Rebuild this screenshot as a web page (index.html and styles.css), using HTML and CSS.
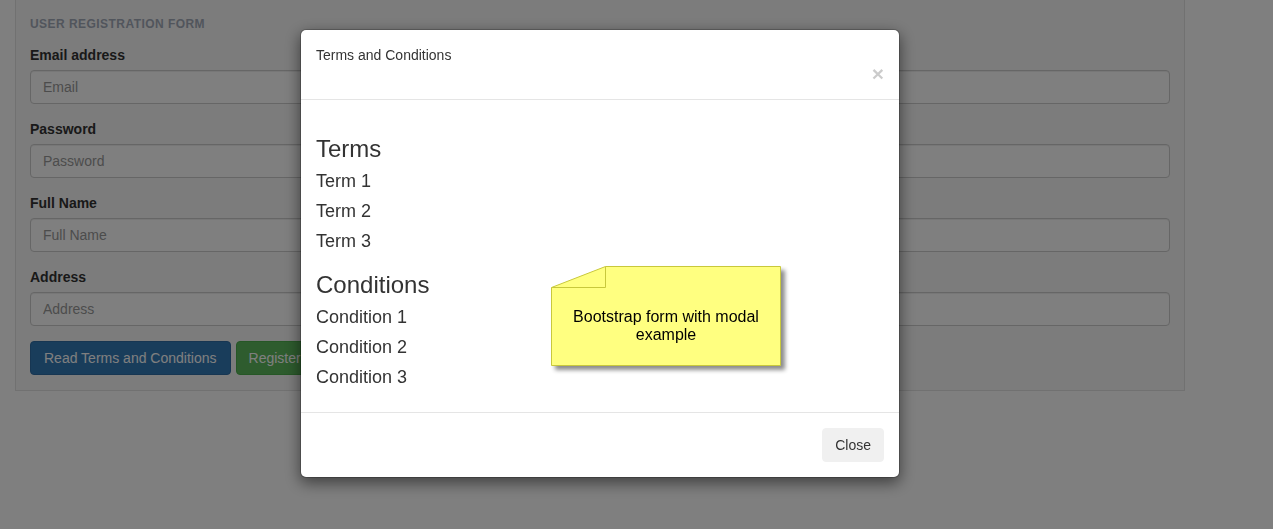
FILE: index.html
```html
<!DOCTYPE html>
<html>
<head>
<meta charset="utf-8">
<title>User Registration Form</title>
<link rel="stylesheet" href="styles.css">
</head>
<body>
<div class="page">
  <div class="well">
    <div class="form-title">User Registration Form</div>
    <div class="form-group">
      <label class="control-label">Email address</label>
      <input class="form-control" type="email" placeholder="Email">
    </div>
    <div class="form-group">
      <label class="control-label">Password</label>
      <input class="form-control" type="password" placeholder="Password">
    </div>
    <div class="form-group">
      <label class="control-label">Full Name</label>
      <input class="form-control" type="text" placeholder="Full Name">
    </div>
    <div class="form-group">
      <label class="control-label">Address</label>
      <input class="form-control" type="text" placeholder="Address">
    </div>
    <div class="btn-row">
      <button class="btn btn-primary">Read Terms and Conditions</button>
      <button class="btn btn-success">Register</button>
    </div>
  </div>
</div>

<div class="backdrop"></div>

<div class="modal">
  <div class="modal-header">
    <h4 class="modal-title">Terms and Conditions</h4>
    <button class="close" type="button">&times;</button>
  </div>
  <div class="modal-body">
    <h3>Terms</h3>
    <h4>Term 1</h4>
    <h4>Term 2</h4>
    <h4>Term 3</h4>
    <h3>Conditions</h3>
    <h4>Condition 1</h4>
    <h4>Condition 2</h4>
    <h4>Condition 3</h4>
  </div>
  <div class="modal-footer">
    <button class="btn btn-default" type="button">Close</button>
  </div>
</div>

<div class="note">
  <svg class="note-shape" width="234" height="104" viewBox="0 0 234 104">
    <polygon points="0.5,21.5 54.5,0.5 229.5,0.5 229.5,99.5 0.5,99.5" fill="#ffff80" stroke="#c8c83c" stroke-width="1"/>
    <path d="M54.5,0.5 V21.5 H0.5" fill="none" stroke="#c8c83c" stroke-width="1"/>
  </svg>
  <div class="note-text">Bootstrap form with modal<br>example</div>
</div>
</body>
</html>
```
FILE: styles.css
```css
* { box-sizing: border-box; }

html, body {
  margin: 0;
  padding: 0;
  background: #fff;
  font-family: "Liberation Sans", Arial, Helvetica, sans-serif;
  font-size: 14px;
  line-height: 1.42857;
  color: #333;
  overflow: hidden;
}

.page {
  padding: 0 15px;
}

.well {
  width: 1170px;
  background: #f8f8f8;
  border: 1px solid #e3e3e3;
  border-top: none;
  padding: 16px 14px 15px 14px;
}

.form-title {
  font-size: 12px;
  font-weight: bold;
  text-transform: uppercase;
  letter-spacing: 0.45px;
  color: #a3abb8;
  line-height: 17px;
  margin-bottom: 12px;
}

.form-group {
  margin-bottom: 15px;
  display: flex;
  flex-direction: column;
}

.control-label {
  display: block;
  font-weight: bold;
  margin-bottom: 5px;
  line-height: 20px;
}

.form-control {
  display: block;
  width: 100%;
  height: 34px;
  padding: 6px 12px;
  font-family: inherit;
  font-size: 14px;
  color: #555;
  background: #fff;
  border: 1px solid #ccc;
  border-radius: 4px;
  box-shadow: inset 0 1px 1px rgba(0,0,0,.075);
}

.form-control::placeholder { color: #999; }

.btn-row {
  display: flex;
  gap: 5px;
}

.btn {
  display: inline-block;
  height: 34px;
  padding: 6px 12px;
  font-family: inherit;
  font-size: 14px;
  line-height: 20px;
  border: 1px solid transparent;
  border-radius: 4px;
  cursor: pointer;
}

.btn-primary {
  color: #fff;
  background: #337ab7;
  border-color: #2e6da4;
  padding: 6px 13px;
}

.btn-success {
  color: #fff;
  background: #5cb85c;
  border-color: #4cae4c;
}

.btn-default {
  color: #333;
  background: #f0f0f0;
  border-color: #f0f0f0;
}

.backdrop {
  position: fixed;
  inset: 0;
  background: rgba(0,0,0,.5);
}

.modal {
  position: fixed;
  left: 300px;
  top: 29px;
  width: 600px;
  background: #fff;
  border: 1px solid rgba(0,0,0,.2);
  border-radius: 6px;
  box-shadow: 0 5px 15px rgba(0,0,0,.5);
  background-clip: padding-box;
}

.modal-header {
  padding: 15px;
  border-bottom: 1px solid #e5e5e5;
}

.modal-header::after {
  content: "";
  display: table;
  clear: both;
}

.modal-title {
  margin: 0;
  font-size: 14px;
  font-weight: 500;
  line-height: 20px;
}

.close {
  float: right;
  margin-top: -2px;
  padding: 0;
  background: transparent;
  border: 0;
  font-family: inherit;
  font-size: 21px;
  font-weight: bold;
  line-height: 1;
  color: #000;
  opacity: .2;
  text-shadow: 0 1px 0 #fff;
}

.modal-body {
  padding: 16px 15px 14px;
}

.modal-body h3 {
  margin: 20px 0 10px;
  font-size: 24px;
  font-weight: 500;
  line-height: 1.1;
}

.modal-body h4 {
  margin: 10px 0;
  font-size: 18px;
  font-weight: 500;
  line-height: 1.1;
}

.modal-footer {
  padding: 15px;
  border-top: 1px solid #e5e5e5;
  display: flex;
  justify-content: flex-end;
}

.note {
  position: absolute;
  left: 551px;
  top: 266px;
  width: 230px;
  height: 100px;
}

.note-shape {
  position: absolute;
  left: 0;
  top: 0;
  filter: drop-shadow(4px 4px 2px rgba(0,0,0,.45));
}

.note-text {
  position: relative;
  height: 100px;
  padding-top: 20px;
  display: flex;
  align-items: center;
  justify-content: center;
  text-align: center;
  font-size: 16px;
  line-height: 18px;
  color: #000;
}
```
